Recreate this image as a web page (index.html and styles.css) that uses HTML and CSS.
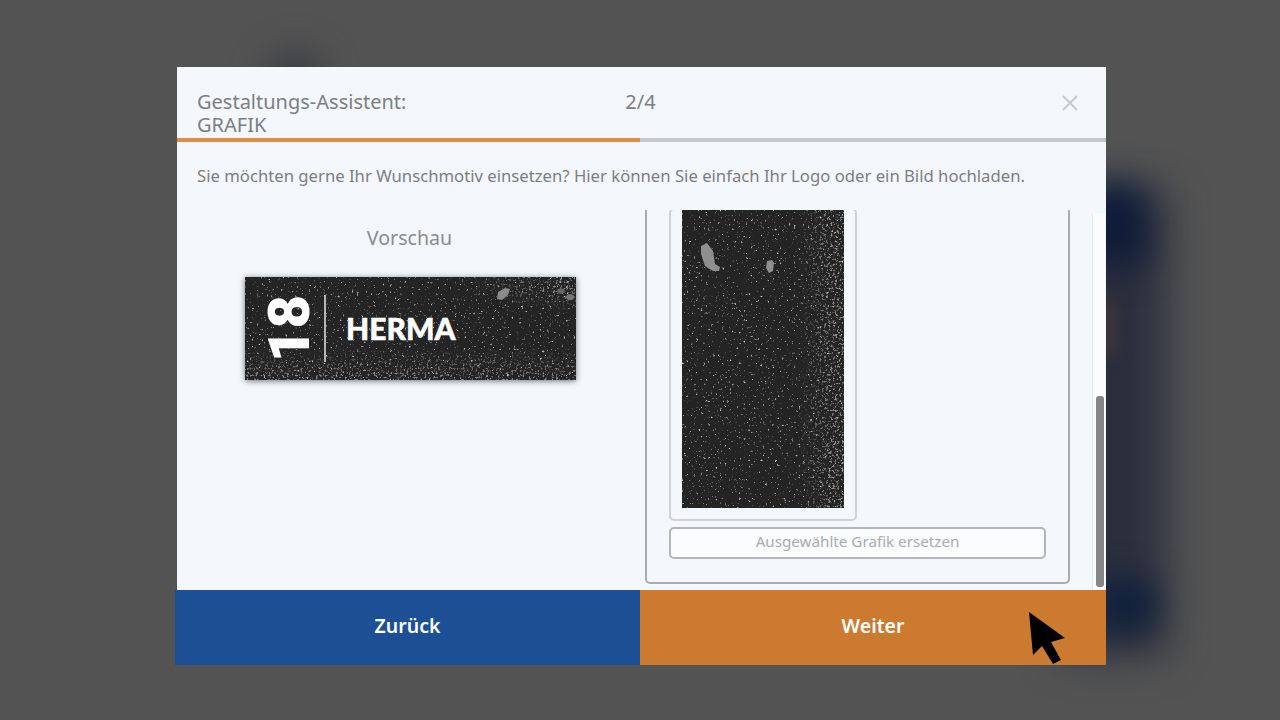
FILE: index.html
```html
<!DOCTYPE html>
<html lang="de">
<head>
<meta charset="utf-8">
<title>Gestaltungs-Assistent</title>
<link rel="stylesheet" href="styles.css">
</head>
<body>
<svg class="defs" width="0" height="0" aria-hidden="true">
  <defs>
    <filter id="sparse" x="0" y="0" width="100%" height="100%">
      <feTurbulence type="fractalNoise" baseFrequency="0.42" numOctaves="2" seed="7"/>
      <feColorMatrix type="matrix" values="0 0 0 0 0.5  0 0 0 0 0.5  0 0 0 0 0.5  6 0 0 0 -3.9"/>
      <feGaussianBlur stdDeviation="0.6"/>
    </filter>
    <filter id="dense" x="0" y="0" width="100%" height="100%">
      <feTurbulence type="fractalNoise" baseFrequency="0.45" numOctaves="2" seed="3"/>
      <feColorMatrix type="matrix" values="0 0 0 0 0.52  0 0 0 0 0.52  0 0 0 0 0.52  7 0 0 0 -3.9"/>
      <feGaussianBlur stdDeviation="0.6"/>
    </filter>
    <linearGradient id="fadeRight" x1="0" y1="0" x2="1" y2="0">
      <stop offset="0.72" stop-color="#000"/>
      <stop offset="0.92" stop-color="#aaa"/>
    </linearGradient>
    <linearGradient id="fadeBottom" x1="0" y1="0" x2="0" y2="1">
      <stop offset="0.68" stop-color="#000"/>
      <stop offset="0.95" stop-color="#999"/>
    </linearGradient>
    <radialGradient id="fadeCorner" cx="1" cy="0" r="0.35">
      <stop offset="0.2" stop-color="#bbb"/>
      <stop offset="1" stop-color="#000"/>
    </radialGradient>
    <mask id="maskRight" maskContentUnits="objectBoundingBox"><rect width="1" height="1" fill="url(#fadeRight)"/></mask>
    <mask id="maskBottom" maskContentUnits="objectBoundingBox"><rect width="1" height="1" fill="url(#fadeBottom)"/></mask>
    <mask id="maskCorner" maskContentUnits="objectBoundingBox"><rect width="1" height="1" fill="url(#fadeCorner)"/></mask>
  </defs>
</svg>

<div class="backdrop" aria-hidden="true">
  <div class="glow glow-top"></div>
  <div class="glow glow-side"></div>
  <div class="glow glow-upper"></div>
  <div class="glow glow-brown"></div>
  <div class="glow glow-lower"></div>
</div>

<div class="dialog">
  <div class="panel">
    <header class="head">
      <div class="title">Gestaltungs-Assistent:<br>GRAFIK</div>
      <div class="step">2/4</div>
      <svg class="close" width="16" height="16" viewBox="0 0 16 16" aria-label="Schließen"><path d="M1 1 15 15M15 1 1 15" fill="none" stroke="#c6c9ce" stroke-width="2"/></svg>
    </header>
    <div class="progress"><div class="progress-done"></div><div class="progress-rest"></div></div>
    <p class="intro">Sie möchten gerne Ihr Wunschmotiv einsetzen? Hier können Sie einfach Ihr Logo oder ein Bild hochladen.</p>
    <div class="content">
      <section class="preview">
        <div class="preview-label">Vorschau</div>
        <div class="plate">
          <svg class="texture" width="331" height="103" viewBox="0 0 331 103">
            <rect width="331" height="103" filter="url(#sparse)"/>
            <rect width="331" height="103" filter="url(#dense)" mask="url(#maskBottom)"/>
            <rect width="331" height="103" filter="url(#dense)" mask="url(#maskCorner)"/>
            <path d="M253 15l7-4 5 1-2 6-6 5-5-1z" fill="#8a8a8a"/>
            <ellipse cx="325" cy="20" rx="4" ry="3" fill="#777"/>
            <ellipse cx="316" cy="14" rx="4" ry="2.5" fill="#666"/>
          </svg>
          <div class="plate-number">18</div>
          <div class="plate-rule"></div>
          <div class="plate-name">HERMA</div>
        </div>
      </section>
      <section class="scroller">
        <div class="scroll-view">
          <div class="upload-box">
            <div class="tile">
              <svg class="tile-img" width="162" height="298" viewBox="0 0 162 298">
                <rect width="162" height="298" filter="url(#sparse)"/>
                <rect width="162" height="298" filter="url(#dense)" mask="url(#maskRight)"/>
                <path d="M19 36l6-3 6 8 2 13 5 3-1 4-6 0-8-5-4-12z" fill="#8f8f8f"/>
                <path d="M85 51l5-1 2 3-1 8-4 2-3-5z" fill="#8f8f8f"/>
              </svg>
            </div>
            <button class="replace" type="button">Ausgewählte Grafik ersetzen</button>
          </div>
        </div>
        <div class="track"><div class="thumb"></div></div>
      </section>
    </div>
  </div>
  <footer class="actions">
    <button class="action back" type="button">Zurück</button>
    <button class="action next" type="button">Weiter</button>
  </footer>
  <svg class="cursor" width="40" height="56" viewBox="0 0 40 56" aria-hidden="true"><path d="M1 1 37 27 23 31 33 49 25 53 14 35 5 44z" fill="#000"/></svg>
</div>
</body>
</html>
```
FILE: styles.css
```css
* { box-sizing: border-box; }
html, body { height: 100%; }
body {
  margin: 0;
  padding: 67px 0 0 175px;
  overflow: hidden;
  font-family: "Noto Sans", "Open Sans", sans-serif;
  background-color: #535353;
}
.defs { position: absolute; }

.backdrop { position: absolute; inset: 0; overflow: hidden; }
.glow { position: absolute; }
.glow-top { left: 265px; top: 50px; width: 60px; height: 50px; border-radius: 50%; background: #3e3f44; filter: blur(16px); }
.glow-side { left: 1060px; top: 195px; width: 105px; height: 460px; background: #2b2f3d; filter: blur(20px); }
.glow-upper { left: 1085px; top: 185px; width: 60px; height: 80px; background: #0c1a38; filter: blur(18px); }
.glow-brown { left: 1095px; top: 300px; width: 20px; height: 55px; background: #3d3537; filter: blur(8px); }
.glow-lower { left: 1095px; top: 580px; width: 60px; height: 50px; background: #10203c; filter: blur(16px); }

.dialog { position: relative; width: 931px; }
.panel {
  margin-left: 2px;
  height: 523px;
  background: #f4f7fc;
  display: flex;
  flex-direction: column;
}

.head {
  height: 71px;
  padding: 23px 28px 0 20px;
  display: grid;
  grid-template-columns: 1fr auto 1fr;
  align-items: start;
  color: #7c7e83;
  font-size: 20px;
  line-height: 23px;
}
.step { margin-left: 6px; }
.close { justify-self: end; margin-top: 5px; }

.progress { display: flex; height: 4px; }
.progress-done { width: 463px; background: #e08d45; }
.progress-rest { flex: 1; background: #c5c7cd; }

.intro {
  margin: 0;
  height: 68px;
  padding: 24px 0 0 20px;
  font-size: 16.7px;
  line-height: 20px;
  color: #7c7e83;
}

.content { flex: 1; display: flex; min-height: 0; }
.preview {
  width: 467px;
  display: flex;
  flex-direction: column;
  align-items: center;
}
.preview-label {
  margin-top: 16px;
  margin-right: 2px;
  line-height: 24px;
  font-size: 19.6px;
  color: #8a8c90;
}
.plate {
  position: relative;
  width: 331px;
  height: 103px;
  margin-top: 27px;
  background: #242424;
  box-shadow: 0 1px 6px rgba(0,0,0,.55);
  display: flex;
  align-items: center;
  color: #fff;
}
.texture { position: absolute; left: 0; top: 0; }
.plate-number {
  position: relative;
  writing-mode: vertical-rl;
  transform: rotate(180deg);
  width: 42px;
  margin-left: 23px;
  font-family: "Roboto", sans-serif;
  font-weight: 900;
  font-size: 58px;
  line-height: 42px;
  letter-spacing: 0;
  text-align: center;
}
.plate-rule {
  position: relative;
  width: 2px;
  height: 67px;
  margin-left: 14px;
  background: #b5b5b5;
}
.plate-name {
  position: relative;
  margin: 0 0 2px 20px;
  font-family: "Lato", sans-serif;
  font-weight: 900;
  font-size: 30px;
  line-height: 34px;
  -webkit-text-stroke: .5px #fff;
}

.scroller { flex: 1; display: flex; min-width: 0; }
.scroll-view {
  flex: 1;
  height: 100%;
  overflow: hidden;
  display: flex;
  flex-direction: column;
  justify-content: flex-end;
  padding: 0 0 6px 1px;
}
.upload-box {
  flex: none;
  width: 425px;
  padding: 0 22px 23px;
  border: 2px solid #a9abaf;
  border-radius: 5px;
  background: #f4f7fc;
}
.tile {
  width: 188px;
  padding: 0 11px 11px;
  border: 2px solid #cfd1d5;
  border-radius: 5px;
}
.tile-img { display: block; background: #242424; }
.replace {
  display: block;
  width: 377px;
  height: 32px;
  margin-top: 6px;
  padding: 0 0 4px;
  border: 2px solid #b3b5b9;
  border-radius: 5px;
  background: #fbfcfe;
  color: #a9abb0;
  font: 15.2px/24px "Noto Sans", sans-serif;
}
.track {
  flex: none;
  width: 13px;
  margin: 3px 1px 0 0;
  padding: 0 1px 3px 3px;
  background: #fcfcfd;
  border-left: 1px solid #e8eaef;
  display: flex;
  flex-direction: column;
  justify-content: flex-end;
}
.thumb { height: 191px; background: #868686; border-radius: 3px; }

.actions { display: flex; height: 75px; }
.action {
  border: 0;
  padding: 0 0 3px;
  color: #fff;
  font: 600 19.5px/24px "Noto Sans", sans-serif;
}
.back { width: 465px; background: #1c4f93; }
.next { flex: 1; background: #cc7a30; }

.cursor { position: absolute; left: 853px; top: 544px; }
```
